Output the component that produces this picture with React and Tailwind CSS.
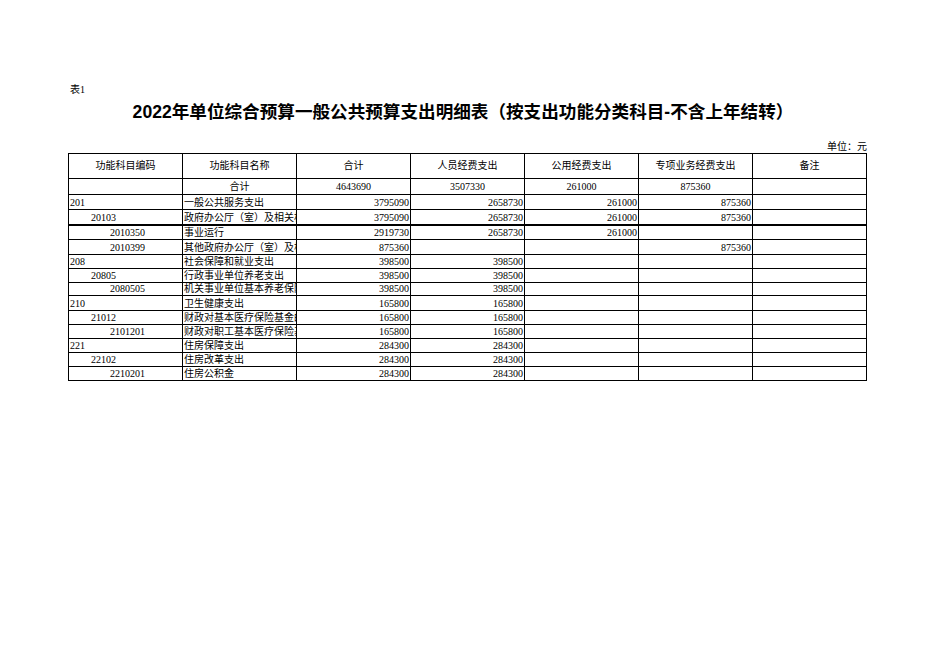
import React from "react";

const serif = { fontFamily: '"Liberation Serif", "Noto Sans CJK SC", serif' };

const headers = ["功能科目编码", "功能科目名称", "合计", "人员经费支出", "公用经费支出", "专项业务经费支出", "备注"];

// [code, level, name, total, staff, public, project, height, thick]
const rows = [
  ["201", 1, "一般公共服务支出", "3795090", "2658730", "261000", "875360", 15],
  ["20103", 2, "政府办公厅（室）及相关机构事务", "3795090", "2658730", "261000", "875360", 15, true],
  ["2010350", 3, "事业运行", "2919730", "2658730", "261000", "", 14],
  ["2010399", 3, "其他政府办公厅（室）及相关机构事务支出", "875360", "", "", "875360", 15],
  ["208", 1, "社会保障和就业支出", "398500", "398500", "", "", 14],
  ["20805", 2, "行政事业单位养老支出", "398500", "398500", "", "", 14],
  ["2080505", 3, "机关事业单位基本养老保险缴费支出", "398500", "398500", "", "", 13],
  ["210", 1, "卫生健康支出", "165800", "165800", "", "", 15],
  ["21012", 2, "财政对基本医疗保险基金的补助", "165800", "165800", "", "", 14],
  ["2101201", 3, "财政对职工基本医疗保险基金的补助", "165800", "165800", "", "", 14],
  ["221", 1, "住房保障支出", "284300", "284300", "", "", 14],
  ["22102", 2, "住房改革支出", "284300", "284300", "", "", 14],
  ["2210201", 3, "住房公积金", "284300", "284300", "", "", 14],
];

const indent = { 1: "pl-[1px]", 2: "pl-[22px]", 3: "pl-[41px]" };

function Cell({ children, className = "" }) {
  return (
    <div className={"w-[114px] shrink-0 border-r border-black overflow-hidden whitespace-nowrap flex " + className}>
      {children}
    </div>
  );
}

export default function App() {
  return (
    <div className="w-[936px] h-[662px] bg-white text-black" style={serif}>
      <div className="pt-[84px] pl-[70px] h-[96px] text-[10px] leading-[12px]">表1</div>
      <div
        className="mt-[5px] w-[798px] ml-[64px] text-center text-[17.6px] leading-[23px] font-bold"
        style={{ fontFamily: '"Liberation Sans", "Noto Sans CJK SC", sans-serif' }}
      >
        2022年单位综合预算一般公共预算支出明细表（按支出功能分类科目-不含上年结转）
      </div>
      <div className="mt-[17px] w-[867px] text-right text-[10px] leading-[12px]">单位：元</div>

      <div className="ml-[68px] w-[799px] border-t border-l border-black text-[10px] leading-[12px]">
        {/* header */}
        <div className="flex h-[25px] border-b border-black">
          {headers.map((h) => (
            <Cell key={h} className="items-center justify-center">
              {h}
            </Cell>
          ))}
        </div>
        {/* total row */}
        <div className="flex h-[16px] border-b border-black">
          <Cell />
          <Cell className="items-end justify-center pb-[1px]">合计</Cell>
          <Cell className="items-end justify-center pb-[1px]">4643690</Cell>
          <Cell className="items-end justify-center pb-[1px]">3507330</Cell>
          <Cell className="items-end justify-center pb-[1px]">261000</Cell>
          <Cell className="items-end justify-center pb-[1px]">875360</Cell>
          <Cell />
        </div>
        {rows.map(([code, lvl, name, a, b, c, d, h, thick]) => (
          <div
            key={code}
            className={"flex border-black " + (thick ? "border-b-2" : "border-b")}
            style={{ height: h + (thick ? 1 : 0) }}
          >
            <Cell className={"items-end " + indent[lvl]}>{code}</Cell>
            <Cell className="items-end pl-[1px]">{name}</Cell>
            <Cell className="items-end justify-end pr-[1px]">{a}</Cell>
            <Cell className="items-end justify-end pr-[1px]">{b}</Cell>
            <Cell className="items-end justify-end pr-[1px]">{c}</Cell>
            <Cell className="items-end justify-end pr-[1px]">{d}</Cell>
            <Cell />
          </div>
        ))}
      </div>
    </div>
  );
}
